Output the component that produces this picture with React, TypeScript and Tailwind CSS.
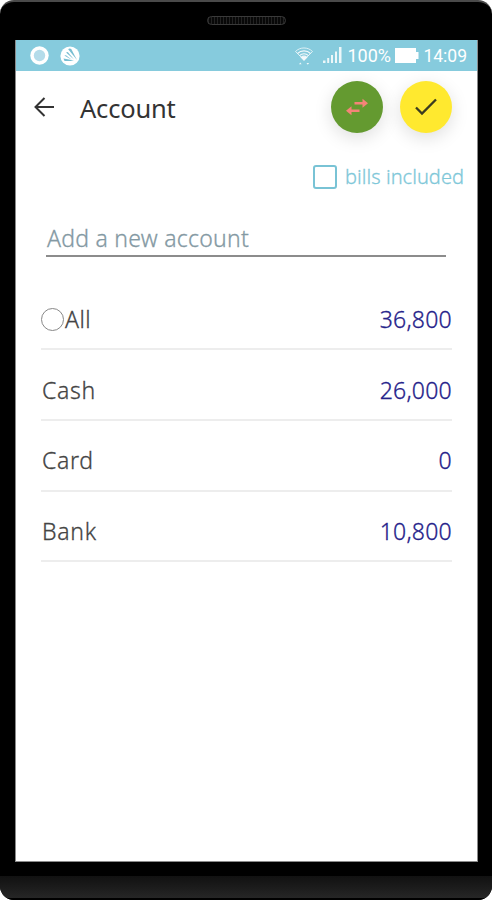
import { clsx } from 'clsx';

interface Account {
  name: string;
  amount: string;
  selectable?: boolean;
}

const accounts: Account[] = [
  { name: 'All', amount: '36,800', selectable: true },
  { name: 'Cash', amount: '26,000' },
  { name: 'Card', amount: '0' },
  { name: 'Bank', amount: '10,800' },
];

function WifiIcon() {
  return (
    <svg width="20" height="20" viewBox="0 0 20 20" fill="none" stroke="#fff" strokeWidth="1.1" className="opacity-90">
      <path d="M1.500 5.500C6 .8 14 .8 18.500 5.500L10 14Z" strokeWidth=".8" />
      <path d="M3.500 7.500C7 4 13 4 16.500 7.500M5.500 9.600c2.600-2.500 6.400-2.500 9 0" />
      <path d="M7.200 11.200c1.700-1.400 3.900-1.400 5.600 0L10 14.200Z" fill="#fff" />
      <path d="M5 18.200l1.300-1.700 1.300 1.700ZM12.500 17l1.300 1.700 1.300-1.700Z" fill="#fff" stroke="none" />
    </svg>
  );
}

function SignalIcon() {
  return (
    <svg width="19" height="17" viewBox="0 0 19 17" fill="#fff" className="opacity-85">
      <path d="M0 13.500h2.500V16H0zM4.200 11h2v5h-2zM8 8h2v8H8zM12 4.500h2V16h-2zM16 0h2.500v16H16z" />
    </svg>
  );
}

function StatusBar() {
  return (
    <div className="flex h-[31px] items-center bg-[#86cbdd] pl-[14px] pr-[10px] text-white">
      <svg width="19" height="19" viewBox="0 0 19 19">
        <circle cx="9.500" cy="9.500" r="9.200" fill="#fff" />
        <circle cx="9.500" cy="9.500" r="5.700" fill="#b4dcea" />
      </svg>
      <svg width="20" height="20" viewBox="0 0 20 20" className="ml-[11px]">
        <circle cx="10" cy="10" r="9.600" fill="#fff" />
        <g fill="#78bed2">
          <path d="M8.200 3.200C9 2 10.800 2.300 11.500 3.500L17 14Z" />
          <path d="M6 6.500 7.800 6 14 13.500Z" />
          <path d="M4.300 9.500 6 9.300 12 14Z" />
          <path d="M3.500 12.600 9 13.400 14 15H4.500Z" />
        </g>
      </svg>
      <div className="ml-auto flex items-center">
        <WifiIcon />
        <div className="ml-[9px]"><SignalIcon /></div>
        <span className="ml-[5px] mt-px w-[44px] whitespace-nowrap font-[Roboto,sans-serif] text-[18px] leading-[30px]">100%</span>
        <svg width="24" height="15" viewBox="0 0 24 15" fill="#fff" className="ml-[4px]">
          <path d="M0 0h21v4h2.500v7H21V15H0z" />
        </svg>
        <span className="ml-[4px] mt-px whitespace-nowrap font-[Roboto,sans-serif] text-[17.500px] leading-[30px]">14:09</span>
      </div>
    </div>
  );
}

function Header() {
  return (
    <header className="flex h-[81px] pl-[18px] pr-[25px] pt-[10px]">
      <svg width="22" height="20" viewBox="0 0 22 20" fill="none" stroke="#333" strokeWidth="2" className="mt-[16px]">
        <path d="M20 10H1.500M10.500 1 1.500 10l9 9" />
      </svg>
      <h1 className="ml-[24px] mt-[9px] text-[25.500px] font-normal leading-[36px] tracking-[-0.200px] text-[#333]">Account</h1>
      <button className="ml-auto flex size-[52px] items-center justify-center rounded-full bg-[#649a30] shadow-[0_5px_18px_rgba(0,0,0,0.13)]">
        <svg width="24" height="18" viewBox="0 0 24 18" fill="#f58478">
          <path d="M9.500 4h8V.8L23 5.300 17.500 9.800V6.500h-8zM14.500 11.500h-8V8.300L1 12.800 6.500 17.300V14h8z" />
        </svg>
      </button>
      <button className="ml-[17px] flex size-[52px] items-center justify-center rounded-full bg-[#ffe92f] shadow-[0_5px_18px_rgba(0,0,0,0.13)]">
        <svg width="24" height="18" viewBox="0 0 24 18" fill="none" stroke="#3b3c20" strokeWidth="2.300">
          <path d="m2 9.500 6 6L22 1.500" />
        </svg>
      </button>
    </header>
  );
}

function AccountRow({ name, amount, selectable }: Account) {
  return (
    <li className={clsx('flex items-center justify-between border-b-2 border-[#ededed] pt-[11px] text-[23px] font-light [-webkit-text-stroke:0.3px]', selectable ? 'h-[70px]' : 'h-[70.800px]')}>
      <span className={clsx('flex items-center text-[#444]', selectable ? 'tracking-[0.400px]' : 'pl-px tracking-[0.700px]')}>
        {selectable && <span className="mr-px size-[23px] rounded-full border border-[#888]" />}
        {name}
      </span>
      <span className="tracking-[0.250px] text-[#25228a]">{amount}</span>
    </li>
  );
}

export default function App() {
  return (
    <div className="h-[900px] w-[492px] overflow-hidden bg-white font-['Noto_Sans',sans-serif]">
      <div className="flex h-full flex-col overflow-hidden rounded-[14px] border-t-2 border-[#4a4a4a] bg-black">
        <div className="flex h-[38px] shrink-0 justify-center pt-[14px]">
          <div className="h-[9px] w-[79px] rounded-full border border-[#3a3a3a] bg-[repeating-linear-gradient(90deg,#222_0px,#222_1px,#080808_1px,#080808_3px)]" />
        </div>

        <main className="ml-[15px] mr-[14px] h-[822px] shrink-0 border border-t-0 border-[#8a8a8a] bg-white">
          <StatusBar />
          <Header />
          <div className="flex h-[50px] items-center justify-end pr-[13px]">
            <span className="size-6 rounded-[3px] border-2 border-[#79c3d5]" />
            <span className="ml-[8px] text-[20px] font-light tracking-[0.050px] text-[#7fc8d9] [-webkit-text-stroke:0.3px]">bills included</span>
          </div>
          <div className="ml-[30px] mr-[31px] mt-[20px] h-[35px] border-b-2 border-[#8c8c8c] pl-px text-[23px] font-light leading-[33px] tracking-[0.250px] text-[#8499a3] [-webkit-text-stroke:0.3px]">
            Add a new account
          </div>
          <ul className="ml-[25px] mr-[25px] mt-[23px]">
            {accounts.map(account => (
              <AccountRow key={account.name} {...account} />
            ))}
          </ul>
        </main>

        <div className="mt-[14px] flex-1 border-b-2 border-black bg-gradient-to-b from-[#111] to-[#262626]" />
      </div>
    </div>
  );
}
